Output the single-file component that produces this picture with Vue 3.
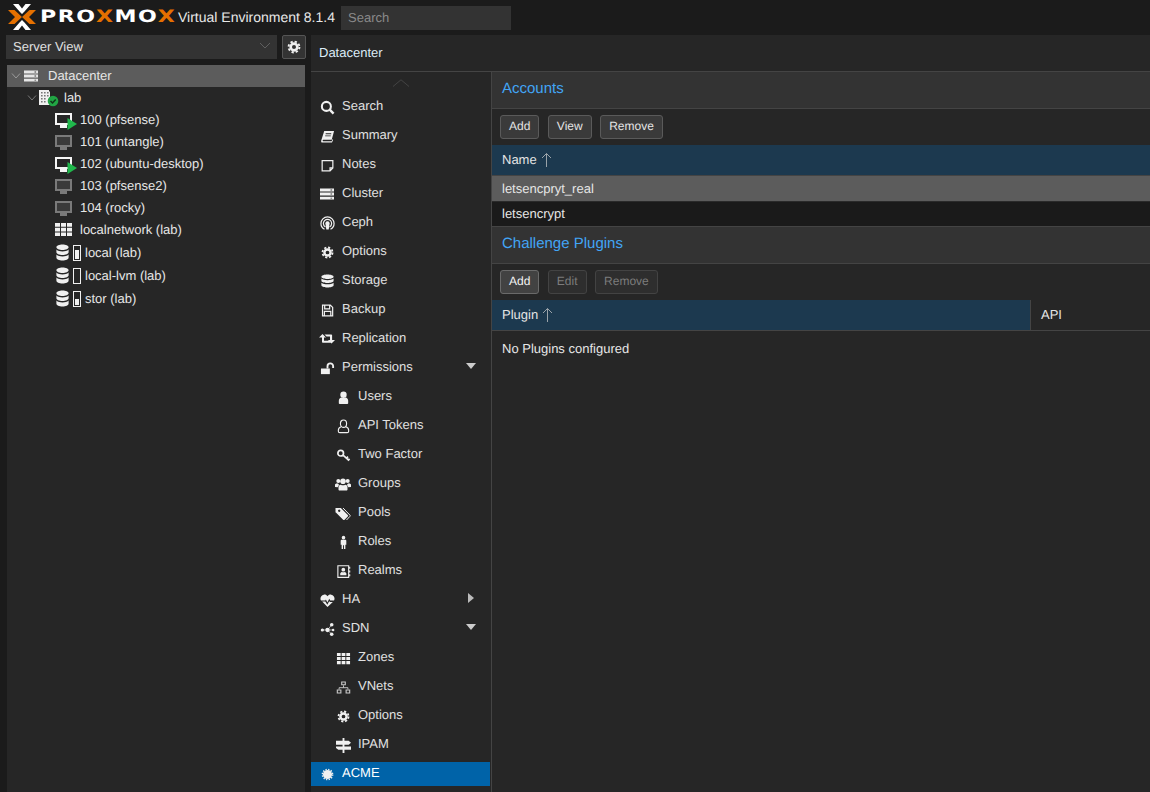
<script setup>
const gear = '<circle cx="8" cy="8" r="3.800" fill="none" stroke="currentColor" stroke-width="3"/><circle cx="8" cy="8" r="6.200" fill="none" stroke="currentColor" stroke-width="2.200" stroke-dasharray="2.600 2.270"/>'
const th = '<path fill="currentColor" d="M1 2h4v3.400H1zM6 2h4v3.400H6zM11 2h4v3.400h-4zM1 6.300h4v3.400H1zM6 6.300h4v3.400H6zM11 6.300h4v3.400h-4zM1 10.600h4V14H1zM6 10.600h4V14H6zM11 10.600h4V14h-4z"/>'
const db = '<path fill="currentColor" d="M8 .5c3.600 0 6.500 1 6.500 2.400S11.600 5.300 8 5.300 1.500 4.300 1.500 2.900 4.400 .5 8 .5zM1.500 4.900C3 6.200 5.400 6.600 8 6.600s5-.4 6.500-1.700v2.400C14.500 8.700 11.600 9.700 8 9.700S1.500 8.700 1.500 7.300zM1.500 9.300c1.500 1.300 3.900 1.700 6.500 1.700s5-.4 6.500-1.700v2.800c0 1.400-2.900 2.400-6.500 2.400s-6.500-1-6.500-2.400z"/>'
const icons = {
  search: '<circle cx="6.800" cy="6.800" r="4.800" fill="none" stroke="currentColor" stroke-width="2.200"/><path d="M10.300 10.300l4.200 4.200" stroke="currentColor" stroke-width="2.600" fill="none"/>',
  book: '<path fill="currentColor" d="M4.500 2h10.500l-2.500 9.500H3.500c-.8 0-1 1.500 0 1.500h9l.6-2 .9.500-1.200 3H2.500C1.300 14.500 1 13.500 1.300 12.300zM6 4.500v1h6v-1zM5.500 6.800v1h6v-1z"/>',
  notes: '<path fill="none" stroke="currentColor" stroke-width="1.300" d="M2.300 2.700h11.400v8l-3 3H2.300zM13.700 10.500h-3v3"/>',
  server: '<path fill="currentColor" d="M1 2.500h14v2.900H1zM1 6.600h14v2.900H1zM1 10.700h14v2.900H1z"/><path fill="#3a3a3a" d="M11.500 3.500h1.600v.9h-1.600zM11.500 7.600h1.600v.9h-1.600zM11.500 11.700h1.600v.9h-1.600z"/>',
  ceph: '<g fill="none" stroke="currentColor" stroke-width="1.300"><path d="M4.800 14.200C2.500 13 1 10.700 1 8c0-3.900 3.100-7 7-7s7 3.100 7 7c0 2.700-1.500 5-3.800 6.200"/><path d="M5.800 11.700C4.500 11 3.600 9.600 3.600 8c0-2.400 2-4.400 4.400-4.400s4.400 2 4.400 4.400c0 1.600-.9 3-2.200 3.700"/></g><path fill="currentColor" d="M8 5.700a2.300 2.300 0 0 1 2 3.500L9.300 14.500H6.700L6 9.200A2.300 2.300 0 0 1 8 5.700z"/>',
  gear,
  db,
  save: '<path fill="none" stroke="currentColor" stroke-width="1.300" d="M2.700 2.200h8.300l2.500 2.500v9H2.700zM5 2.500v3.700h5.300V2.500M4.700 13.500V9h6.800v4.500"/>',
  retweet: '<path fill="currentColor" d="M3.500 3L7 6.500H5v3.300h5.500l2 2H3.800C3.300 11.800 3 11.500 3 11V6.500H0zM5.500 3.500h6.800c.5 0 .8.300.8.800v4.700H16l-3.500 3.500L9 9h2V5.500H7.500z"/>',
  unlock: '<path fill="currentColor" d="M1 8h9.500v6H1z"/><path fill="none" stroke="currentColor" stroke-width="2" d="M8 8V5.500a3 3 0 0 1 6 0V7.500"/>',
  user: '<circle cx="8" cy="5" r="3.400" fill="currentColor"/><path fill="currentColor" d="M3 14v-2.500C3 9.500 4.500 8.300 5.800 8c1.300.8 3.100.8 4.400 0 1.300.3 2.800 1.500 2.800 3.500V14c0 .5-.3.800-1 .8H4c-.7 0-1-.3-1-.8z"/>',
  usero: '<g fill="none" stroke="currentColor" stroke-width="1.200"><ellipse cx="8" cy="5" rx="3.300" ry="3.900"/><path d="M5.300 8.300C3.500 9 2.500 10.200 2.500 12v1c0 1 .7 1.500 1.500 1.500h8c.8 0 1.500-.5 1.500-1.500v-1c0-1.800-1-3-2.800-3.700"/></g>',
  key: '<circle cx="5" cy="5.500" r="3" fill="none" stroke="currentColor" stroke-width="1.800"/><path fill="none" stroke="currentColor" stroke-width="1.800" d="M7.500 7.500l6.500 6M11 11l1.800-1.800M13 13l1.500-1.500"/>',
  users: '<circle cx="3.300" cy="5" r="2" fill="currentColor"/><circle cx="12.700" cy="5" r="2" fill="currentColor"/><circle cx="8" cy="5.300" r="2.800" fill="currentColor"/><path fill="currentColor" d="M0 11V8.800C0 7.800 1 7.200 3 7.500c.3.600.7 1.100 1.200 1.400-.8.500-1.300 1.200-1.500 2.300zM16 11V8.800c0-1-1-1.600-3-1.300-.3.600-.7 1.100-1.200 1.400.8.500 1.300 1.200 1.500 2.300zM3.500 13.500v-2.200c0-1.500 1-2.500 2.300-2.600 1.300.8 3.100.8 4.400 0 1.300.1 2.300 1.100 2.300 2.600v2.200c0 .7-.5 1-1 1H4.500c-.5 0-1-.3-1-1z"/>',
  tags: '<path fill="currentColor" d="M.5 3h5.300l7 7c.5.5.5 1 0 1.500l-3.200 3.200c-.5.500-1 .5-1.500 0l-7-7C.4 7.500.5 7 .5 6.500zM3 5.800a1.200 1.200 0 1 0 0-.1z"/><path fill="none" stroke="currentColor" stroke-width="1" d="M8 3l6.800 7c.6.6.5 1-.1 1.600L11.500 15"/>',
  male: '<circle cx="8" cy="2.800" r="1.900" fill="currentColor"/><path fill="currentColor" d="M5 6c0-.6.400-1 1-1h4c.6 0 1 .4 1 1v4.500h-1V15H8.500v-4h-1v4H6v-4.500H5z"/>',
  realm: '<path fill="none" stroke="currentColor" stroke-width="1.200" d="M2 1.800h11.500v12.400H2z"/><path fill="currentColor" d="M14 3h1.200v2H14zM14 7h1.200v2H14zM14 11h1.200v2H14z"/><circle cx="7.800" cy="6" r="2" fill="currentColor"/><path fill="currentColor" d="M4.500 12v-1.500c0-1 .8-1.800 1.800-2 1 .5 2 .5 3 0 1 .2 1.800 1 1.800 2V12z"/>',
  heart: '<path fill="currentColor" d="M8 3.500C9 2 10.500 1.500 12 1.800c2.200.4 3.600 2.300 3.500 4.300 0 .7-.3 1.400-.6 1.900h-4l-1-2-2.100 4-1.500-3-.6 1H1.100C.7 7.400.5 6.800.5 6.100.4 4.100 1.800 2.200 4 1.800 5.500 1.500 7 2 8 3.500zM2.300 9h3.400L7.800 12.500l2.100-4 .5 1h3.300L8 14.800z"/>',
  sdn: '<circle cx="2.500" cy="8.500" r="1.700" fill="currentColor"/><circle cx="8" cy="8.500" r="2.300" fill="currentColor"/><circle cx="12.500" cy="3" r="1.900" fill="currentColor"/><circle cx="12.500" cy="13" r="1.900" fill="currentColor"/><circle cx="14" cy="8.500" r="1.300" fill="currentColor"/><path stroke="currentColor" fill="none" stroke-width=".7" d="M2.500 8.500H14M8 8.500l4.500-5.500M8 8.500l4.500 4.500"/>',
  th,
  sitemap: '<path fill="#c8c8c8" d="M5.500 1.500h5v4.200h-5zM.8 10h5v4.500h-5zM10.200 10h5v4.500h-5z"/><path fill="#262626" d="M6.700 2.700h2.600V4.500H6.700zM2 11.200h2.600v2.100H2zM11.400 11.200H14v2.100h-2.600z"/><path fill="none" stroke="#c8c8c8" d="M8 5.700v2.500M3.300 10V8.200h9.400V10"/>',
  signs: '<path fill="currentColor" d="M7 0h2v16H7z"/><path fill="currentColor" d="M0 2.800h13.500L16 5l-2.500 2.200H0zM0 9h16v3.400H2.500L0 10.700z"/>',
  acme: '<circle cx="8" cy="8" r="5.600" fill="currentColor"/><circle cx="8" cy="8" r="6.300" fill="none" stroke="currentColor" stroke-width="1.800" stroke-dasharray="1.600 1.700"/>'
}
const sizes = { gear: 13, acme: 13, ceph: 15, users: 16, tags: 16, retweet: 16, server: 16 }
const menu = [
  ['Search', 'search'], ['Summary', 'book'], ['Notes', 'notes'], ['Cluster', 'server'], ['Ceph', 'ceph'],
  ['Options', 'gear'], ['Storage', 'db'], ['Backup', 'save'], ['Replication', 'retweet'],
  ['Permissions', 'unlock', 0, 'down'], ['Users', 'user', 1], ['API Tokens', 'usero', 1], ['Two Factor', 'key', 1],
  ['Groups', 'users', 1], ['Pools', 'tags', 1], ['Roles', 'male', 1], ['Realms', 'realm', 1],
  ['HA', 'heart', 0, 'right'], ['SDN', 'sdn', 0, 'down'], ['Zones', 'th', 1], ['VNets', 'sitemap', 1],
  ['Options', 'gear', 1], ['IPAM', 'signs', 1], ['ACME', 'acme', 0, '', true]
].map(([label, icon, sub, arrow, active]) => ({ label, icon, sub, arrow, active, size: sizes[icon] || 15 }))
const vms = [
  { n: '100 (pfsense)', on: true }, { n: '101 (untangle)', on: false }, { n: '102 (ubuntu-desktop)', on: true },
  { n: '103 (pfsense2)', on: false }, { n: '104 (rocky)', on: false }
]
const stores = [
  { n: 'local (lab)', fill: 9 }, { n: 'local-lvm (lab)', fill: 0 }, { n: 'stor (lab)', fill: 6 }
]
</script>

<template>
  <div class="app">
    <header class="header">
      <div class="logo">
        <svg class="mark" width="28" height="26" viewBox="0 0 28 26">
          <path fill="#e57000" d="M0 6h6.500L14 13l-7.500 7H0l7-7zM28 6h-6.500L14 13l7.500 7H28l-7-7z"/>
          <path fill="#fff" d="M5 0h5.500L14 4.500 17.500 0H23l-6.500 7.500-2.500 2.500-2.500-2.500zM5 26h5.500L14 21.500 17.500 26H23l-6.500-7.500L14 16l-2.500 2.500z"/>
        </svg>
        <span class="wordmark">PRO<i>X</i>MO<i>X</i></span>
      </div>
      <span class="version">Virtual Environment 8.1.4</span>
      <div class="search">Search</div>
    </header>
    <div class="main">
      <aside class="left">
        <div class="selector">
          <div class="combo"><span>Server View</span>
            <svg width="12" height="8" viewBox="0 0 12 8"><path d="M1 1l5 5 5-5" fill="none" stroke="#5f5f5f"/></svg>
          </div>
          <button class="gearbtn"><svg width="14" height="14" viewBox="0 0 16 16" v-html="icons.gear"></svg></button>
        </div>
        <div class="tree">
          <div class="row sel dc">
            <svg class="chev" width="12" height="8" viewBox="0 0 12 8"><path d="M2 1.500l4 4.500 4-4.500" fill="none" stroke="#9a9a9a"/></svg>
            <svg class="ic" width="16" height="16" viewBox="0 0 16 16" v-html="icons.server"></svg>
            <span class="t">Datacenter</span>
          </div>
          <div class="row node">
            <svg class="chev" width="12" height="8" viewBox="0 0 12 8"><path d="M2 1.500l4 4.500 4-4.500" fill="none" stroke="#777"/></svg>
            <svg class="ic" width="20" height="20" viewBox="0 0 20 20">
              <path fill="#f0f0f0" d="M0 2h10v1l1 1v13H0z"/>
              <path fill="#777" d="M2 4h1.600v1.600H2zM5 4h1.600v1.600H5zM8 4h1.600v1.600H8zM2 7h1.600v1.600H2zM5 7h1.600v1.600H5zM8 7h1.600v1.600H8zM2 10h1.600v1.600H2zM5 10h1.600v1.600H5zM2 13h1.600v1.600H2zM5 13h1.600v1.600H5z"/>
              <circle cx="14" cy="13" r="5.300" fill="#21a544"/>
              <path d="M11.500 13l2 2 3.200-3.500" fill="none" stroke="#10331a" stroke-width="1.500"/>
            </svg>
            <span class="t">lab</span>
          </div>
          <div v-for="v in vms" :key="v.n" class="row vm">
            <svg class="vmic" width="22" height="18" viewBox="0 0 22 18">
              <path :fill="v.on ? '#f5f5f5' : '#7a7a7a'" d="M0 0h17v12h-5v3H5v-3H0z"/>
              <path :fill="v.on ? '#262626' : '#3a3a3a'" d="M2 2h13v8H2z"/>
              <path v-if="v.on" fill="#20b84c" d="M12.500 5l9.500 6-9.500 6z"/>
            </svg>
            <span class="t">{{ v.n }}</span>
          </div>
          <div class="row vm">
            <svg width="22" height="16" viewBox="0 0 22 16">
              <path fill="#f0f0f0" d="M0 1h5v3.700H0zM6 1h5v3.700H6zM12 1h5v3.700h-5zM0 5.700h5v3.700H0zM6 5.700h5v3.700H6zM12 5.700h5v3.700h-5zM0 10.400h5v3.700H0zM6 10.400h5v3.700H6zM12 10.400h5v3.700h-5z"/>
            </svg>
            <span class="t">localnetwork (lab)</span>
          </div>
          <div v-for="s in stores" :key="s.n" class="row st">
            <svg width="15" height="17" viewBox="0 0 16 15" preserveAspectRatio="none" v-html="icons.db" class="dbic"></svg>
            <svg class="bar" width="8" height="16" viewBox="0 0 8 16">
              <rect x=".5" y=".5" width="7" height="15" fill="none" stroke="#f0f0f0"/>
              <rect v-if="s.fill" x="2" :y="14 - s.fill" width="4" :height="s.fill" fill="#f0f0f0"/>
            </svg>
            <span class="t">{{ s.n }}</span>
          </div>
        </div>
      </aside>
      <section class="center">
        <div class="title">Datacenter</div>
        <div class="body">
          <nav class="menu">
            <div class="scroll"><svg width="18" height="8" viewBox="0 0 18 8"><path d="M1 7.500L9 .8l8 6.700" fill="none" stroke="#444"/></svg></div>
            <div v-for="m in menu" :key="m.label + m.icon" class="mi" :class="{ sub: m.sub, active: m.active }">
              <span class="icbox">
                <svg :width="m.size" :height="m.size" viewBox="0 0 16 16" v-html="icons[m.icon]"></svg>
              </span>
              <span>{{ m.label }}</span>
              <i v-if="m.arrow" :class="'arrow ' + m.arrow"></i>
            </div>
          </nav>
          <div class="panel">
            <div class="phead">Accounts</div>
            <div class="toolbar">
              <button class="btn">Add</button><button class="btn">View</button><button class="btn">Remove</button>
            </div>
            <div class="ghead">
              <div class="col first grow"><span>Name</span>
                <svg width="11" height="16" viewBox="0 0 11 16"><path d="M5.500 15V1.500M1 6l4.500-4.500L10 6" fill="none" stroke="#9aa3a9"/></svg>
              </div>
            </div>
            <div class="gr selrow">letsencpryt_real</div>
            <div class="gr plain">letsencrypt</div>
            <div class="phead">Challenge Plugins</div>
            <div class="toolbar two">
              <button class="btn hot">Add</button><button class="btn off">Edit</button><button class="btn off">Remove</button>
            </div>
            <div class="ghead">
              <div class="col first plug"><span>Plugin</span>
                <svg width="11" height="16" viewBox="0 0 11 16"><path d="M5.500 15V1.500M1 6l4.500-4.500L10 6" fill="none" stroke="#9aa3a9"/></svg>
              </div>
              <div class="col api"><span>API</span></div>
            </div>
            <div class="empty">No Plugins configured</div>
          </div>
        </div>
      </section>
    </div>
  </div>
</template>

<style>
html, body { margin: 0; background: #1b1b1b; overflow: hidden; }
</style>

<style scoped>
.app {
  width: 1150px; height: 792px; overflow: hidden; display: flex; flex-direction: column;
  background: #1b1b1b; color: #e6e6e6; font: 13px/15px "Liberation Sans", Arial, sans-serif;
  text-rendering: geometricPrecision;
}
.header { height: 35px; flex: none; display: flex; align-items: center; padding-left: 8px; }
.logo { width: 170px; flex: none; display: flex; align-items: center; height: 26px; margin-top: -1px; }
.mark { flex: none; }
.wordmark {
  display: inline-block; margin-left: 4px; margin-top: 1px; font: 900 17px/17px "DejaVu Sans", sans-serif; color: #fff;
  letter-spacing: 1.200px; transform: scaleX(1.300); transform-origin: left center;
}
.wordmark i { font-style: normal; color: #e57000; }
.version { font-size: 14px; width: 163px; flex: none; color: #e8e8e8; margin-top: -1px; }
.search { width: 163px; height: 24px; line-height: 24px; background: #333; color: #8a8a8a; padding-left: 7px; margin-top: 1px; }
.main { flex: 1; display: flex; min-height: 0; }
.left { width: 300px; margin-left: 6px; flex: none; display: flex; flex-direction: column; }
.selector { display: flex; gap: 5px; height: 24px; flex: none; }
.combo {
  flex: 1; background: #333; display: flex; align-items: center; justify-content: space-between;
  padding: 0 6px 2px 7px; color: #e0e0e0;
}
.gearbtn {
  width: 24px; height: 24px; padding: 0; background: #333; border: 1px solid #555; border-radius: 2px; color: #f0f0f0;
  display: flex; align-items: center; justify-content: center;
}
.tree { flex: 1; margin: 6px 1px 0 1px; background: #262626; }
.row { height: 22px; display: flex; align-items: center; color: #e6e6e6; }
.row .t { position: relative; top: -1px; }
.sel { background: #5c5c5c; }
.dc { padding-left: 3px; }
.dc .chev { margin-right: 1px; }
.dc .t { margin-left: 9px; }
.node { padding-left: 19px; }
.node .chev { margin-right: 1px; }
.node .t { margin-left: 5px; }
.vm { padding-left: 48px; }
.vm svg { width: 22px; flex: none; }
.vmic { margin-top: 3px; }
.vm .t { margin-left: 3px; }
.st { height: 23px; padding-left: 48px; }
.dbic { color: #f0f0f0; flex: none; }
.bar { margin-left: 3px; flex: none; }
.st .t { margin-left: 4px; top: 0; }
.center { flex: 1; margin-left: 5px; background: #262626; display: flex; flex-direction: column; min-width: 0; }
.title { height: 36px; flex: none; line-height: 36px; padding-left: 8px; color: #dcebf7; border-bottom: 1px solid #444; }
.body { flex: 1; display: flex; min-height: 0; }
.menu { width: 180px; flex: none; border-right: 1px solid #444; padding-bottom: 5px; }
.scroll { height: 23px; display: flex; justify-content: center; align-items: flex-start; padding-top: 7px; box-sizing: border-box; }
.mi {
  height: 24px; margin-bottom: 5px; padding: 3px 0 0 8px; box-sizing: border-box; display: flex; gap: 7px; color: #e0e0e0; width: 179px;
}
.icbox { width: 16px; height: 16px; flex: none; margin-top: 1px; display: flex; align-items: center; justify-content: center; color: #f0f0f0; }
.mi.sub { padding-left: 24px; }
.mi.active { background: #0063a8; color: #fff; }
.arrow { margin-left: auto; width: 0; height: 0; }
.arrow.down { margin: 4px 14px 0 auto; border: 5.500px solid transparent; border-top: 6px solid #ccc; border-bottom: 0; }
.arrow.right { margin: 2px 16px 0 auto; border: 5.500px solid transparent; border-left: 6px solid #bbb; border-right: 0; }
.panel { flex: 1; min-width: 0; }
.phead {
  height: 36px; background: #333; border-bottom: 1px solid #444; box-sizing: content-box; color: #42a5f5;
  font-size: 15px; line-height: 34px; padding-left: 10px;
}
.toolbar { height: 36px; box-sizing: border-box; padding: 6px 8px; display: flex; gap: 8.500px; }
.btn {
  height: 24px; padding: 0 8px 2px; background: #3a3a3a; border: 1px solid #5a5a5a; border-radius: 3px; color: #e4e4e4;
  font: 12px/20px "Liberation Sans", Arial, sans-serif; text-rendering: geometricPrecision;
}
.btn.hot { background: #424242; border-color: #6a6a6a; color: #f5f5f5; }
.btn.off { background: #2e2e2e; border-color: #434343; color: #7c7c7c; }
.ghead { height: 31px; box-sizing: border-box; display: flex; border-bottom: 1px solid #444; }
.col { display: flex; align-items: center; gap: 4px; padding-left: 10px; box-sizing: border-box; color: #e4e4e4; }
.col span { position: relative; top: -1px; }
.col.first { background: #1c394f; }
.grow { flex: 1; }
.plug { width: 538px; }
.col.api { flex: 1; border-left: 1px solid #444; }
.gr { padding-left: 10px; display: flex; align-items: center; }
.selrow { height: 25px; background: #5c5c5c; border-bottom: 1px solid #2a2a2a; box-sizing: content-box; }
.plain { height: 25px; padding-bottom: 1px; box-sizing: border-box; background: #1a1a1a; border-bottom: 1px solid #444; }
.empty { padding: 10px 10px 0; }
</style>
